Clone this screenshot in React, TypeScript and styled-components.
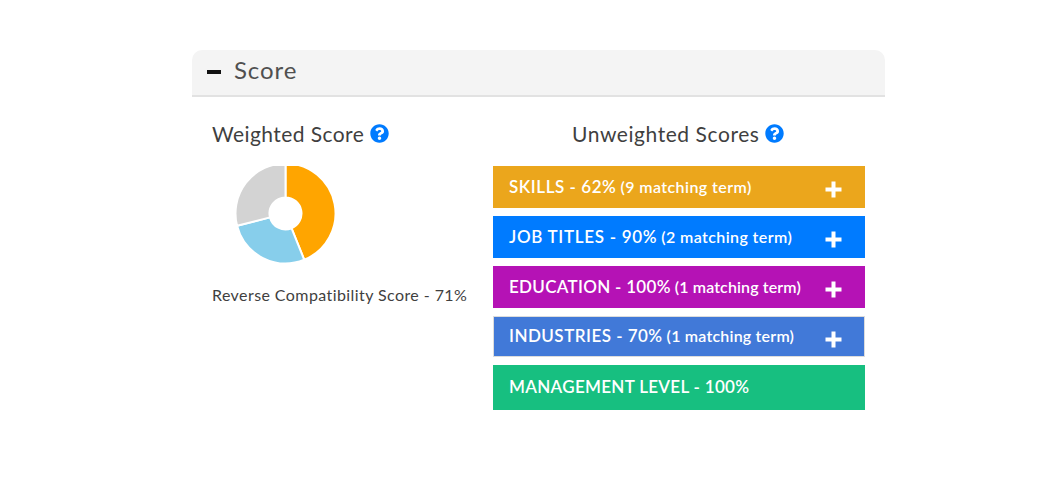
import React from 'react';
import styled, { createGlobalStyle } from 'styled-components';

const GlobalStyle = createGlobalStyle`
  * {
    box-sizing: border-box;
  }
  body {
    margin: 0;
    background: #fff;
    font-family: Lato, 'Open Sans', sans-serif;
    color: #3f3f3f;
  }
`;

const StyledPanel = styled.section`
  width: 693px;
  margin: 50px 0 0 192px;
`;
const StyledPanelHeader = styled.header`
  display: flex;
  align-items: center;
  gap: 13px;
  height: 47px;
  padding: 0 15px 3px;
  background: #f4f4f4;
  border-bottom: 2px solid #e2e2e2;
  border-radius: 10px 10px 0 0;
`;
const StyledCollapseIcon = styled.span`
  width: 14px;
  height: 4px;
  margin-top: 1px;
  background: #111;
`;
const StyledTitle = styled.h2`
  margin: 0;
  padding-bottom: 2px;
  font-size: 24px;
  font-weight: 400;
  line-height: 30px;
  letter-spacing: 0.9px;
  color: #505050;
`;
const StyledPanelBody = styled.div`
  display: flex;
  padding: 22px 20px 0;
`;
const StyledWeighted = styled.div`
  width: 281px;
`;
const StyledUnweighted = styled.div`
  width: 372px;
`;
const StyledHeading = styled.h3<{ $indent?: number; $spacing: number }>`
  display: flex;
  align-items: center;
  height: 28px;
  margin: 0 0 19px;
  padding-left: ${({ $indent = 0 }) => $indent}px;
  font-size: 21px;
  font-weight: 400;
  letter-spacing: ${({ $spacing }) => $spacing}px;
  white-space: nowrap;

  svg {
    flex: none;
    margin-left: 6px;
  }
`;
const StyledChart = styled.svg`
  display: block;
  margin-left: 23px;
`;
const StyledCaption = styled.p`
  margin: 18px 0 0;
  font-size: 16px;
  line-height: 24px;
  letter-spacing: 0.42px;
  white-space: nowrap;
`;
const StyledBarList = styled.div`
  display: flex;
  flex-direction: column;
`;
const StyledBar = styled.div<{ $color: string; $height: number; $outlined?: boolean }>`
  display: flex;
  align-items: center;
  height: ${({ $height }) => $height}px;
  margin-bottom: 8px;
  padding: 0 23px 0 16px;
  background: ${({ $color }) => $color};
  background-clip: padding-box;
  border: ${({ $outlined }) => ($outlined ? '1px solid #dcdcdc' : 'none')};
  ${({ $outlined }) => $outlined && 'padding: 0 22px 0 15px;'}
  color: #fff;
  white-space: nowrap;

  svg {
    margin: 5px 0 0 auto;
  }
`;
const StyledBarLabel = styled.span<{ $spacing: number }>`
  padding-bottom: 2px;
  font-size: 17px;
  font-weight: 600;
  letter-spacing: ${({ $spacing }) => $spacing}px;
`;
const StyledBarTerms = styled.span<{ $spacing: number }>`
  margin-left: 4px;
  padding-bottom: 2px;
  font-size: 16px;
  font-weight: 600;
  letter-spacing: ${({ $spacing }) => $spacing}px;
`;

type TScore = {
  label: string;
  terms?: string;
  color: string;
  height: number;
  outlined?: boolean;
  labelSpacing: number;
  termsSpacing?: number;
};

const scores: TScore[] = [
  { label: 'SKILLS - 62%', terms: '(9 matching term)', color: '#eba61c', height: 42, labelSpacing: 0.55, termsSpacing: 0.42 },
  { label: 'JOB TITLES - 90%', terms: '(2 matching term)', color: '#007bff', height: 42, labelSpacing: 0.7, termsSpacing: 0.4 },
  { label: 'EDUCATION - 100%', terms: '(1 matching term)', color: '#b512b5', height: 42, labelSpacing: 0.3, termsSpacing: 0.12 },
  { label: 'INDUSTRIES - 70%', terms: '(1 matching term)', color: '#4179d8', height: 41, outlined: true, labelSpacing: 0.48, termsSpacing: 0.2 },
  { label: 'MANAGEMENT LEVEL - 100%', color: '#17bf80', height: 45, labelSpacing: 0.31 },
];

const slices = [
  { from: 0, to: 158, color: '#ffa500' },
  { from: 158, to: 255.6, color: '#87ceeb' },
  { from: 255.6, to: 360, color: '#d3d3d3' },
];

const slicePath = (from: number, to: number) => {
  const center = 50.5;
  const point = (angle: number, radius: number) => {
    const rad = (angle * Math.PI) / 180;
    return `${center + radius * Math.sin(rad)} ${47.4 - radius * Math.cos(rad)}`;
  };
  const large = to - from > 180 ? 1 : 0;
  return `M${point(from, 50)} A50 50 0 ${large} 1 ${point(to, 50)} L${point(to, 16)} A16 16 0 ${large} 0 ${point(from, 16)}Z`;
};

const HelpIcon = () => (
  <svg width="19" height="19" viewBox="0 0 512 512">
    <path
      fill="#007bff"
      d="M504 256c0 136.997-111.043 248-248 248S8 392.997 8 256C8 119.083 119.043 8 256 8s248 111.083 248 248zM262.655 90c-54.497 0-89.255 22.957-116.549 63.758-3.536 5.286-2.353 12.415 2.715 16.258l34.699 26.31c5.205 3.947 12.621 3.008 16.665-2.122 17.864-22.658 30.113-35.797 57.303-35.797 20.429 0 45.698 13.148 45.698 32.958 0 14.976-12.363 22.667-32.534 33.976C247.128 238.528 216 254.941 216 296v4c0 6.627 5.373 12 12 12h56c6.627 0 12-5.373 12-12v-1.333c0-28.462 83.186-29.647 83.186-106.667 0-58.002-60.165-102-116.531-102zM256 338c-25.365 0-46 20.635-46 46 0 25.364 20.635 46 46 46s46-20.636 46-46c0-25.365-20.635-46-46-46z"
    />
  </svg>
);

const PlusIcon = () => (
  <svg width="17" height="17" viewBox="0 0 17 17">
    <path d="M8.5 0.5V16.5M0.5 8.5H16.5" stroke="#fff" strokeWidth="4" />
  </svg>
);

const ScoreChart = () => (
  <StyledChart width="101" height="99" viewBox="0 0 101 99">
    {slices.map(({ from, to, color }) => (
      <path key={color} d={slicePath(from, to)} fill={color} stroke="#fff" strokeWidth="2" />
    ))}
  </StyledChart>
);

const App = () => {
  return (
    <>
      <GlobalStyle />
      <StyledPanel>
        <StyledPanelHeader>
          <StyledCollapseIcon />
          <StyledTitle>Score</StyledTitle>
        </StyledPanelHeader>
        <StyledPanelBody>
          <StyledWeighted>
            <StyledHeading $spacing={0.42}>
              Weighted Score
              <HelpIcon />
            </StyledHeading>
            <ScoreChart />
            <StyledCaption>Reverse Compatibility Score - 71%</StyledCaption>
          </StyledWeighted>
          <StyledUnweighted>
            <StyledHeading $indent={79} $spacing={0.56}>
              Unweighted Scores
              <HelpIcon />
            </StyledHeading>
            <StyledBarList>
              {scores.map((score) => (
                <StyledBar
                  key={score.label}
                  $color={score.color}
                  $height={score.height}
                  $outlined={score.outlined}
                >
                  <StyledBarLabel $spacing={score.labelSpacing}>{score.label}</StyledBarLabel>
                  {score.terms && (
                    <>
                      <StyledBarTerms $spacing={score.termsSpacing ?? 0}>{score.terms}</StyledBarTerms>
                      <PlusIcon />
                    </>
                  )}
                </StyledBar>
              ))}
            </StyledBarList>
          </StyledUnweighted>
        </StyledPanelBody>
      </StyledPanel>
    </>
  );
};

export default App;
